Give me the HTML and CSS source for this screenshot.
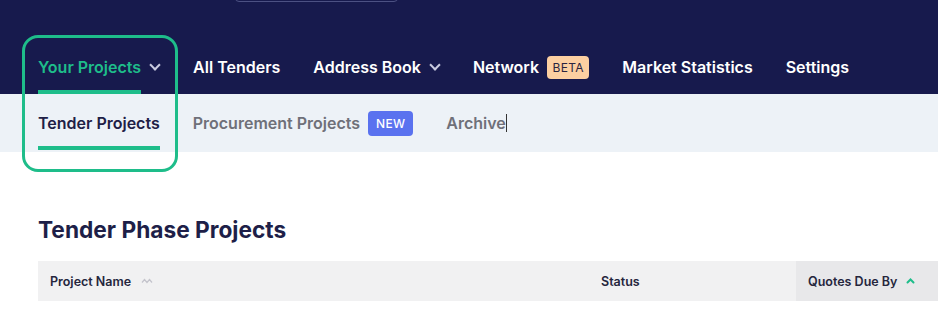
FILE: index.html
```html
<!DOCTYPE html>
<html lang="en">
<head>
    <meta charset="UTF-8">
    <meta name="viewport" content="width=device-width, initial-scale=1.0">
    <title>Tender Phase Projects</title>
    <link rel="stylesheet" href="styles.css">
</head>
<body>
    <div class="topbar">
        <div class="search-stub"></div>
        <nav class="main-nav">
            <a class="nav-item active" href="#">Your Projects <span class="chev"></span></a>
            <a class="nav-item" href="#">All Tenders</a>
            <a class="nav-item" href="#">Address Book <span class="chev"></span></a>
            <a class="nav-item" href="#">Network <span class="badge beta">BETA</span></a>
            <a class="nav-item" href="#">Market Statistics</a>
            <a class="nav-item" href="#">Settings</a>
        </nav>
    </div>

    <div class="subbar">
        <a class="sub-item active" href="#">Tender Projects</a>
        <a class="sub-item" href="#">Procurement Projects <span class="badge new">NEW</span></a>
        <a class="sub-item" href="#">Archive<span class="caret"></span></a>
    </div>

    <div class="highlight"></div>

    <div class="content">
        <h1>Tender Phase Projects</h1>
        <div class="table-head">
            <div class="col col-name">Project Name
                <svg class="sort" width="12" height="6" viewBox="0 0 12 6"><path d="M1 4.5 L3.5 1.5 L6 4.5 L8.5 1.5 L11 4.5" fill="none" stroke="#c4c4cc" stroke-width="1.2"/></svg>
            </div>
            <div class="col col-status">Status</div>
            <div class="col col-due">Quotes Due By
                <svg class="sort-up" width="9" height="6" viewBox="0 0 9 6"><path d="M1.5 4.5 L4.5 1.5 L7.5 4.5" fill="none" stroke="#1ebd8a" stroke-width="2" stroke-linecap="round"/></svg>
            </div>
        </div>
    </div>
</body>
</html>
```
FILE: styles.css
```css
body {
    margin: 0;
    font-family: Inter, "Noto Sans", Arial, sans-serif;
    background: #fff;
    position: relative;
    overflow: hidden;
}
a {
    text-decoration: none;
}
.topbar {
    background: #171a4d;
    height: 94px;
    position: relative;
}
.search-stub {
    position: absolute;
    left: 235px;
    top: -20px;
    width: 161px;
    height: 20px;
    border: 1px solid #4c5183;
    border-radius: 4px;
}
.main-nav {
    display: flex;
    align-items: center;
    gap: 33px;
    padding: 40px 0 0 38px;
    height: 94px;
    box-sizing: border-box;
}
.nav-item {
    color: #fff;
    font-size: 16px;
    font-weight: 600;
    display: flex;
    align-items: center;
    height: 54px;
    position: relative;
    white-space: nowrap;
}
.nav-item.active {
    color: #1ebd8a;
}
.nav-item.active::after {
    content: "";
    position: absolute;
    left: 0;
    width: 103px;
    bottom: 0;
    height: 4px;
    background: #1ebd8a;
}
.chev {
    display: inline-block;
    width: 6px;
    height: 6px;
    border-right: 2px solid #c9cbe0;
    border-bottom: 2px solid #c9cbe0;
    transform: rotate(45deg);
    margin: -4px 1px 0 10px;
}
.badge {
    display: inline-block;
    font-size: 12px;
    font-weight: 500;
    border-radius: 4px;
    margin-left: 8px;
    letter-spacing: 0.3px;
}
.beta {
    background: #fccfa1;
    color: #2a2440;
    font-weight: 400;
    padding: 4px 5.5px;
}
.new {
    background: #5a72ef;
    color: #fff;
    padding: 5px 8px;
}
.subbar {
    background: #edf2f7;
    height: 58px;
    display: flex;
    align-items: center;
    gap: 33px;
    padding-left: 38px;
}
.sub-item {
    color: #6f7079;
    font-size: 16px;
    font-weight: 600;
    height: 58px;
    display: flex;
    align-items: center;
    position: relative;
    white-space: nowrap;
}
.sub-item.active {
    color: #1e2046;
}
.sub-item.active::after {
    content: "";
    position: absolute;
    left: 0;
    right: 0;
    bottom: 2px;
    height: 4px;
    background: #1ebd8a;
}
.caret {
    display: inline-block;
    width: 1px;
    height: 18px;
    background: #333;
}
.highlight {
    position: absolute;
    left: 22px;
    top: 35px;
    width: 150px;
    height: 131px;
    border: 3px solid #1ebd8a;
    border-radius: 16px;
}
.content {
    padding: 63px 0 0 38px;
}
h1 {
    margin: 0 0 16px;
    font-size: 22.7px;
    font-weight: 700;
    color: #1e1f48;
    line-height: 30px;
}
.table-head {
    display: flex;
    background: #f1f1f2;
    height: 40px;
    align-items: stretch;
}
.col {
    font-size: 12.5px;
    font-weight: 600;
    color: #25263d;
    display: flex;
    align-items: center;
    white-space: nowrap;
}
.col-name {
    padding-left: 12px;
    width: 551px;
}
.col-status {
    width: 195px;
}
.col-due {
    background: #e8e8ea;
    padding-left: 12px;
    flex: 1;
}
.sort {
    margin-left: 10px;
}
.sort-up {
    margin-left: 9px;
}
```
